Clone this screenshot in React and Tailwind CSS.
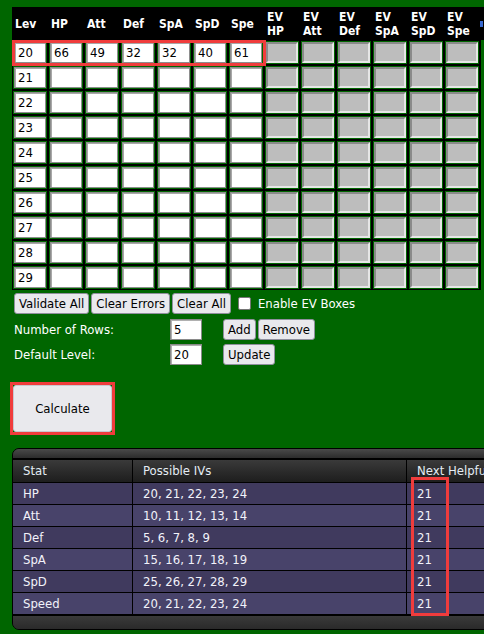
import React from "react";

const F = { fontFamily: '"DejaVu Sans Condensed", "DejaVu Sans", Tahoma, sans-serif' };

const heads = [
  ["Lev"], ["HP"], ["Att"], ["Def"], ["SpA"], ["SpD"], ["Spe"],
  ["EV", "HP"], ["EV", "Att"], ["EV", "Def"], ["EV", "SpA"], ["EV", "SpD"], ["EV", "Spe"],
];

const first = ["20", "66", "49", "32", "32", "40", "61"];
const levels = ["20", "21", "22", "23", "24", "25", "26", "27", "28", "29"];

const results = [
  ["HP", "20, 21, 22, 23, 24", "21"],
  ["Att", "10, 11, 12, 13, 14", "21"],
  ["Def", "5, 6, 7, 8, 9", "21"],
  ["SpA", "15, 16, 17, 18, 19", "21"],
  ["SpD", "25, 26, 27, 28, 29", "21"],
  ["Speed", "20, 21, 22, 23, 24", "21"],
];

function Btn({ children, className = "" }) {
  return (
    <button
      className={
        "h-[21px] px-[4px] rounded-[3px] border border-[#8f8f9d] bg-[#e9e9ed] text-black text-[13px] leading-none " +
        className
      }
      style={F}
    >
      {children}
    </button>
  );
}

function TextBox({ value }) {
  return (
    <div className="w-[32px] shrink-0 h-[21px] bg-white border-[1px] border-[#8a8a8a] shadow-[inset_1px_1px_0_#b0b0b0] text-[13px] leading-[19px] pl-[3px] text-black">
      {value}
    </div>
  );
}

export default function App() {
  return (
    <div className="w-full min-h-screen overflow-hidden bg-[#006600] pt-[7px]" style={F}>
      {/* IV table */}
      <div className="relative ml-[12px] w-[480px]">
        <div className="flex h-[33px] bg-black w-[472px]">
          {heads.map((h, i) => (
            <div
              key={i}
              className="w-[36px] shrink-0 flex flex-col justify-center pl-[3px] text-white font-bold text-[12px] leading-[14px]"
            >
              {h.map((t, j) => (
                <span key={j}>{t}</span>
              ))}
            </div>
          ))}
          <div className="w-[4px] flex items-center">
            <div className="w-[3px] h-[6px] bg-[#3a6ad0]" />
          </div>
        </div>
        <div className="grid grid-cols-[repeat(13,34px)] gap-[2px] bg-black w-[469px] pl-[1px] py-[1px]">
          {levels.map((lv, r) =>
            heads.map((_, c) => (
              <div key={r + "-" + c} className="h-[23px] bg-[#006600] p-[1px]">
                {c < 7 ? (
                  <div className="w-[32px] h-[21px] bg-white border border-[#8d8d8d] shadow-[inset_1px_1px_0_#a8a8a8] text-[13px] leading-[19px] pl-[3px] text-black">
                    {c === 0 ? lv : r === 0 ? first[c] : ""}
                  </div>
                ) : (
                  <div className="w-[32px] h-[21px] bg-[#bdbdbd] border-2 border-t-[#8a8a8a] border-l-[#8a8a8a] border-b-[#e6e6e6] border-r-[#e6e6e6]" />
                )}
              </div>
            ))
          )}
        </div>
        <div className="absolute left-0 top-[33px] w-[254px] h-[26px] border-[3px] border-[#f03c3c] pointer-events-none" />
      </div>

      {/* Controls */}
      <div className="ml-[14px] mt-[3px] flex items-center gap-[2px]">
        <Btn>Validate All</Btn>
        <Btn>Clear Errors</Btn>
        <Btn>Clear All</Btn>
        <div className="ml-[5px] w-[13px] h-[13px] rounded-[2px] bg-white border border-[#767676]" />
        <span className="ml-[5px] text-white text-[13px]">Enable EV Boxes</span>
      </div>
      <div className="ml-[14px] mt-[5px] flex items-center">
        <span className="w-[156px] shrink-0 text-white text-[13px]">Number of Rows:</span>
        <TextBox value="5" />
        <div className="ml-[21px] flex gap-[2px]">
          <Btn>Add</Btn>
          <Btn>Remove</Btn>
        </div>
      </div>
      <div className="ml-[14px] mt-[4px] flex items-center">
        <span className="w-[156px] shrink-0 text-white text-[13px]">Default Level:</span>
        <TextBox value="20" />
        <div className="ml-[21px] flex gap-[2px]">
          <Btn>Update</Btn>
        </div>
      </div>

      <div className="ml-[10px] mt-[17px] w-[105px] h-[53px] border-[3px] border-[#f03c3c]">
        <button
          className="w-full h-full rounded-[3px] bg-[#e9e9ed] border border-[#c8c8d0] text-black text-[13px]"
          style={F}
        >
          Calculate
        </button>
      </div>

      {/* Results panel */}
      <div className="relative ml-[12px] mt-[13px] w-[520px] rounded-l-[7px] border border-black bg-[#2b2b2b] overflow-hidden">
        <div className="h-[9px] bg-gradient-to-b from-[#4a4a4a] to-[#2c2c2c]" />
        <div className="border-t-2 border-black" />
        <div className="grid grid-cols-[120px_274px_1fr] h-[22px] bg-gradient-to-b from-[#3a3a3a] to-[#1e1e1e] text-[#e4ecf4] text-[13px]">
          <div className="pl-[10px] flex items-center border-r border-black">Stat</div>
          <div className="pl-[10px] flex items-center border-r border-black">Possible IVs</div>
          <div className="pl-[10px] flex items-center whitespace-nowrap">Next Helpful Level</div>
        </div>
        {results.map((r, i) => (
          <div
            key={i}
            className={
              "grid grid-cols-[120px_274px_1fr] h-[22px] border-t border-black text-[#f2f2fa] text-[13px] " +
              (i % 2 === 0 ? "bg-[#403a5e]" : "bg-[#48436a]")
            }
          >
            <div className="pl-[10px] flex items-center border-r border-black">{r[0]}</div>
            <div className="pl-[10px] flex items-center border-r border-black">{r[1]}</div>
            <div className="pl-[10px] flex items-center">{r[2]}</div>
          </div>
        ))}
        <div className="border-t-2 border-black" />
        <div className="h-[13px] bg-gradient-to-b from-[#3a3a3a] to-[#2a2a2a]" />
        <div className="absolute left-[398px] top-[28px] w-[38px] h-[139px] border-[3px] border-[#f03c3c] pointer-events-none" />
      </div>
    </div>
  );
}
